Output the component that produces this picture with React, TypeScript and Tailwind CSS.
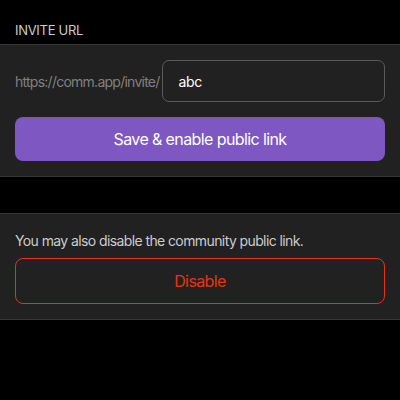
export default function App() {
  return (
    <div className="h-[400px] w-[400px] overflow-hidden bg-black font-['Inter','Noto_Sans',sans-serif]">
      <div className="px-[15px] pb-[6px] pt-[22px] text-[13px] leading-[16px] tracking-[-0.3px] text-[#cccccc]">INVITE URL</div>
      <section className="border-y border-[#363636] bg-[#212121] px-[15px] pb-[15px] pt-[15px]">
        <div className="flex items-center">
          <span className="text-[14px] tracking-[-0.75px] text-[#808080]">https://comm.app/invite/</span>
          <div className="ml-[2px] flex h-[42px] flex-1 items-center rounded-[7px] border border-[#5a5a5a] px-[16px] text-[14px] tracking-[-0.4px] text-white">
            abc
          </div>
        </div>
        <button
          type="button"
          className="mt-[15px] flex h-[44px] w-full items-center justify-center rounded-[8px] bg-[#7e57c2] text-[16px] tracking-[-0.6px] text-white"
        >
          Save &amp; enable public link
        </button>
      </section>

      <section className="mt-[36px] border-y border-[#363636] bg-[#212121] px-[15px] pb-[15px] pt-[18px]">
        <p className="text-[14px] leading-[17px] tracking-[-0.6px] text-[#cccccc]">You may also disable the community public link.</p>
        <button
          type="button"
          className="mt-[9px] flex h-[46px] w-full items-center justify-center rounded-[8px] border border-[#e3360f] text-[16px] tracking-[-0.6px] text-[#e3360f]"
        >
          Disable
        </button>
      </section>
    </div>
  )
}
